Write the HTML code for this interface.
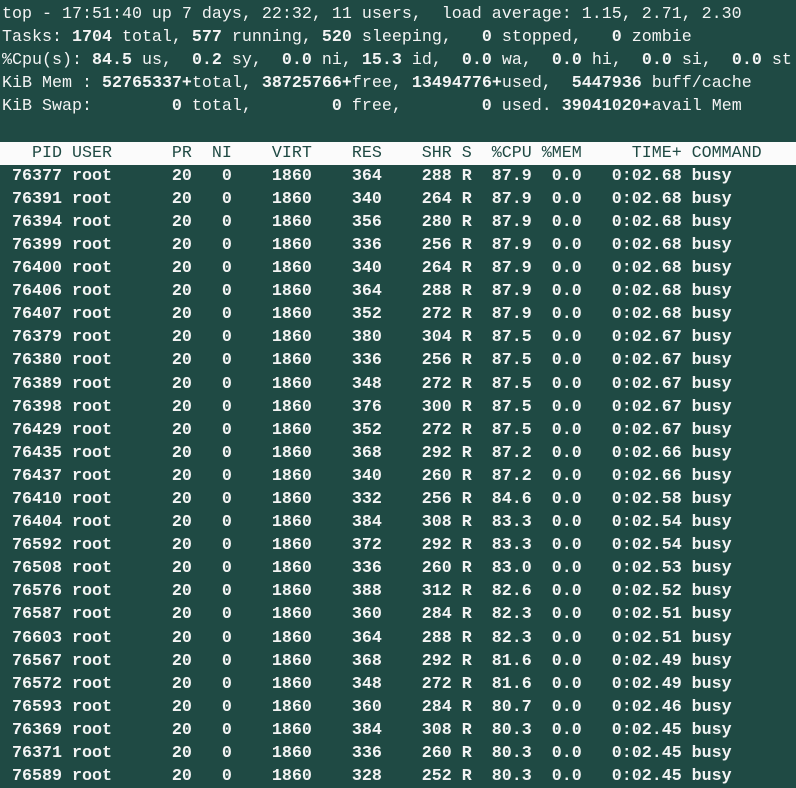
<!DOCTYPE html>
<html><head><meta charset="utf-8"><style>
html,body{margin:0;padding:0;background:#1f4a44;width:796px;height:788px;overflow:hidden}
pre{margin:0;padding:3px 0 0 2px;font-family:"Liberation Mono",monospace;font-size:16.67px;line-height:23.1px;color:#f4f4f4;white-space:pre}
.h{background:#fbfbfb;color:#1f4a44;display:block;margin-left:-2px;padding-left:2px;width:796px}
b{font-weight:bold}
</style></head><body><pre>top - 17:51:40 up 7 days, 22:32, 11 users,  load average: 1.15, 2.71, 2.30
Tasks: <b>1704</b> total, <b>577</b> running, <b>520</b> sleeping,   <b>0</b> stopped,   <b>0</b> zombie
%Cpu(s): <b>84.5</b> us,  <b>0.2</b> sy,  <b>0.0</b> ni, <b>15.3</b> id,  <b>0.0</b> wa,  <b>0.0</b> hi,  <b>0.0</b> si,  <b>0.0</b> st
KiB Mem : <b>52765337+</b>total, <b>38725766+</b>free, <b>13494776+</b>used,  <b>5447936</b> buff/cache
KiB Swap:        <b>0</b> total,        <b>0</b> free,        <b>0</b> used. <b>39041020+</b>avail Mem

<span class="h">   PID USER      PR  NI    VIRT    RES    SHR S  %CPU %MEM     TIME+ COMMAND</span><b> 76377 root      20   0    1860    364    288 R  87.9  0.0   0:02.68 busy
 76391 root      20   0    1860    340    264 R  87.9  0.0   0:02.68 busy
 76394 root      20   0    1860    356    280 R  87.9  0.0   0:02.68 busy
 76399 root      20   0    1860    336    256 R  87.9  0.0   0:02.68 busy
 76400 root      20   0    1860    340    264 R  87.9  0.0   0:02.68 busy
 76406 root      20   0    1860    364    288 R  87.9  0.0   0:02.68 busy
 76407 root      20   0    1860    352    272 R  87.9  0.0   0:02.68 busy
 76379 root      20   0    1860    380    304 R  87.5  0.0   0:02.67 busy
 76380 root      20   0    1860    336    256 R  87.5  0.0   0:02.67 busy
 76389 root      20   0    1860    348    272 R  87.5  0.0   0:02.67 busy
 76398 root      20   0    1860    376    300 R  87.5  0.0   0:02.67 busy
 76429 root      20   0    1860    352    272 R  87.5  0.0   0:02.67 busy
 76435 root      20   0    1860    368    292 R  87.2  0.0   0:02.66 busy
 76437 root      20   0    1860    340    260 R  87.2  0.0   0:02.66 busy
 76410 root      20   0    1860    332    256 R  84.6  0.0   0:02.58 busy
 76404 root      20   0    1860    384    308 R  83.3  0.0   0:02.54 busy
 76592 root      20   0    1860    372    292 R  83.3  0.0   0:02.54 busy
 76508 root      20   0    1860    336    260 R  83.0  0.0   0:02.53 busy
 76576 root      20   0    1860    388    312 R  82.6  0.0   0:02.52 busy
 76587 root      20   0    1860    360    284 R  82.3  0.0   0:02.51 busy
 76603 root      20   0    1860    364    288 R  82.3  0.0   0:02.51 busy
 76567 root      20   0    1860    368    292 R  81.6  0.0   0:02.49 busy
 76572 root      20   0    1860    348    272 R  81.6  0.0   0:02.49 busy
 76593 root      20   0    1860    360    284 R  80.7  0.0   0:02.46 busy
 76369 root      20   0    1860    384    308 R  80.3  0.0   0:02.45 busy
 76371 root      20   0    1860    336    260 R  80.3  0.0   0:02.45 busy
 76589 root      20   0    1860    328    252 R  80.3  0.0   0:02.45 busy</b></pre></body></html>
